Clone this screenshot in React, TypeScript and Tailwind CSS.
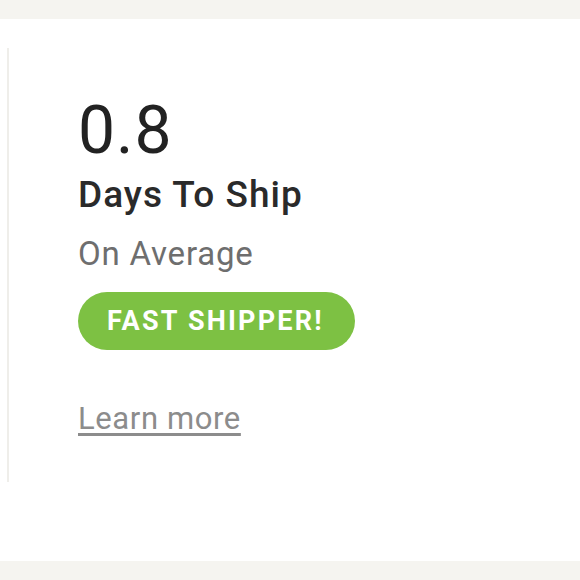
export default function App() {
  return (
    <div
      className="flex h-[580px] w-[580px] flex-col bg-white"
      style={{ fontFamily: "Roboto, 'Liberation Sans', sans-serif" }}
    >
      <div className="h-[19px] bg-[#f5f4f0]" />
      <main className="flex-1 pt-[29px]">
        <section className="ml-[7px] w-fit border-l-2 border-[#efeeea] pb-[48px] pl-[69px] pr-10 pt-[51px]">
          <div className="text-[66px] leading-[64px] font-normal tracking-[1px] text-[#222222]">0.8</div>
          <h2 className="mt-[14px] text-[37px] leading-[36px] font-medium tracking-[1px] text-[#2a2a2a]">
            Days To Ship
          </h2>
          <p className="mt-[25px] text-[33px] leading-[32px] tracking-[0.8px] text-[#6e6e6e]">On Average</p>
          <div className="mt-[22px] inline-flex h-[58px] items-center rounded-full bg-[#7dc143] pl-[29px] pr-[31px] text-[27px] font-bold tracking-[2.2px] text-white">
            FAST SHIPPER!
          </div>
          <a
            href="#"
            className="mt-[54px] block w-fit text-[31px] leading-[30px] tracking-[0.6px] text-[#8c8c8c] underline underline-offset-4"
          >
            Learn more
          </a>
        </section>
      </main>
      <div className="h-[19px] bg-[#f5f4f0]" />
    </div>
  );
}
